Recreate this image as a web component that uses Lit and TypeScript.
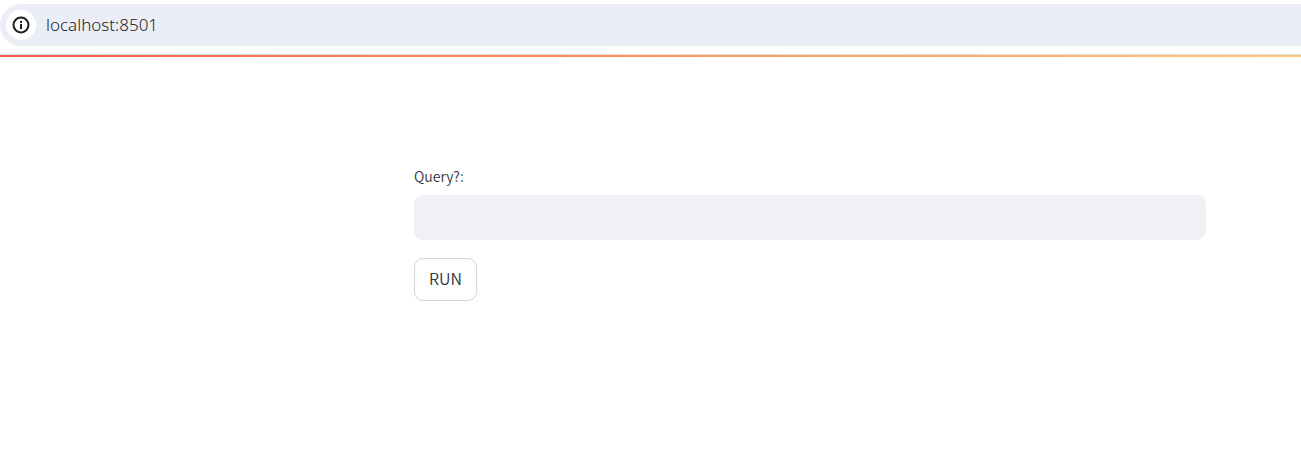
import { LitElement, html, css } from "lit";
import { customElement, state } from "lit/decorators.js";

@customElement("app-root")
export class AppRoot extends LitElement {
  static styles = css`
    :host { display: block; min-height: 100vh; background: #fff; color: #31333f; font-family: "Noto Sans CJK SC", "Noto Sans", sans-serif; }
    * { box-sizing: border-box; }
    .toolbar { padding: 4px 0 8px; border-bottom: 1px solid #dadde1; }
    .address { display: flex; align-items: center; gap: 10px; height: 42px; padding: 0 6px; border-radius: 21px 0 0 21px; background: #ebeef7; }
    .info { display: grid; place-items: center; flex: none; width: 30px; height: 30px; padding: 0; border: 0; border-radius: 50%; background: #fff; color: #1f1f1f; }
    .url { flex: 1; min-width: 0; height: 30px; padding: 0; border: 0; outline: 0; background: none; color: #1f1f1f; font: 300 17px/30px "Noto Sans", "Open Sans", sans-serif; }
    .decoration { height: 2px; background: linear-gradient(90deg, #ff5b50, #ff965f 50%, #ffcc70); }
    main { display: flex; flex-direction: column; align-items: flex-start; padding: 108px 95px 40px 414px; }
    label { font-size: 14px; font-weight: 350; line-height: 22px; }
    .query { width: 100%; height: 45px; margin: 8px 0 18px; padding: 0 14px; border: 0; outline: 0; border-radius: 9px; background: #f0f1f6; color: inherit; font: inherit; font-size: 16px; }
    .run { height: 43px; padding: 0 14px 4px; border: 1px solid #d6d6d9; border-radius: 9px; background: #fff; color: inherit; font: 350 16px/24px "Noto Sans CJK SC", "Noto Sans", sans-serif; }
  `;

  @state() private query = "";

  render() {
    return html`
      <header class="toolbar">
        <div class="address">
          <button class="info" type="button" aria-label="Site information">
            <svg width="18" height="18" viewBox="0 0 18 18" fill="none" stroke="currentColor" stroke-width="2">
              <circle cx="9" cy="9" r="7.5" />
              <path d="M9 8v5M9 5v2" />
            </svg>
          </button>
          <input class="url" aria-label="Address" value="localhost:8501" spellcheck="false" />
        </div>
      </header>
      <div class="decoration"></div>
      <main>
        <label for="query">Query?:</label>
        <input id="query" class="query" type="text" autocomplete="off" .value=${this.query}
          @input=${(e: InputEvent) => { this.query = (e.target as HTMLInputElement).value; }} />
        <button class="run" type="button">RUN</button>
      </main>
    `;
  }
}
